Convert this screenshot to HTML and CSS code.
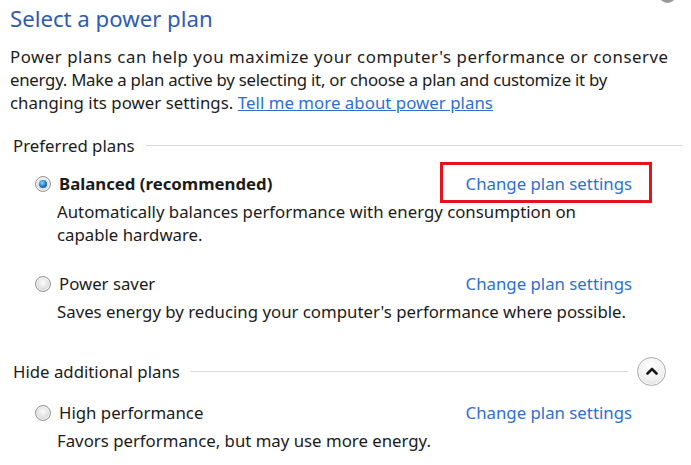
FILE: index.html
```html
<!DOCTYPE html>
<html>
<head>
<meta charset="utf-8">
<link rel="stylesheet" href="styles.css">
</head>
<body>
<div class="page">
  <span class="corner-btn"></span>
  <h1 class="title">Select a power plan</h1>
  <p class="intro"><span class="line-a">Power plans can help you maximize your computer's performance or conserve</span><br><span class="line-b">energy. Make a plan active by selecting it, or choose a plan and customize it by</span><br><span class="line-c">changing its power settings. <a class="link underline" href="#">Tell me more about power plans</a></span></p>

  <div class="group-header first">
    <span class="group-label">Preferred plans</span>
    <span class="rule"></span>
  </div>

  <div class="plan plan-first">
    <div class="plan-row">
      <span class="radio checked"></span>
      <span class="plan-name bold">Balanced (recommended)</span>
      <a class="link plan-link highlighted" href="#">Change plan settings</a>
    </div>
    <div class="plan-desc">Automatically balances performance with energy consumption on<br>capable hardware.</div>
  </div>

  <div class="plan plan-second">
    <div class="plan-row">
      <span class="radio"></span>
      <span class="plan-name">Power saver</span>
      <a class="link plan-link" href="#">Change plan settings</a>
    </div>
    <div class="plan-desc">Saves energy by reducing your computer's performance where possible.</div>
  </div>

  <div class="group-header second">
    <span class="group-label">Hide additional plans</span>
    <span class="rule short"></span>
    <span class="collapse-btn">
      <svg width="12" height="8" viewBox="0 0 12 8"><path d="M1.5 6.5 L6 2 L10.5 6.5" fill="none" stroke="#1a1a1a" stroke-width="2.6" stroke-linecap="round" stroke-linejoin="round"/></svg>
    </span>
  </div>

  <div class="plan plan-third">
    <div class="plan-row">
      <span class="radio"></span>
      <span class="plan-name">High performance</span>
      <a class="link plan-link" href="#">Change plan settings</a>
    </div>
    <div class="plan-desc">Favors performance, but may use more energy.</div>
  </div>
</div>
</body>
</html>
```

FILE: styles.css
```css
html, body {
  margin: 0;
  padding: 0;
  background: #ffffff;
}
body {
  font-family: "Noto Sans", "Open Sans", sans-serif;
  font-size: 16.8px;
  color: #1b1b1b;
  overflow: hidden;
}
.page {
  position: relative;
  width: 691px;
  height: 465px;
  padding-left: 10px;
  box-sizing: border-box;
}
.corner-btn {
  position: absolute;
  left: 659px;
  top: -14px;
  width: 17px;
  height: 17px;
  border-radius: 50%;
  background: #9a9a9a;
}
.title {
  margin: 0;
  padding-top: 4px;
  font-size: 22.2px;
  font-weight: 400;
  line-height: 30px;
  color: #2f5bb5;
}
.intro {
  margin: 11px 0 0 0;
  line-height: 23px;
  white-space: nowrap;
}
.line-a { letter-spacing: 0.55px; }
.line-b { letter-spacing: -0.25px; }
.line-c { letter-spacing: 0.05px; }
.link {
  color: #2d6fd2;
  text-decoration: none;
}
.underline {
  text-decoration: underline;
}
.group-header {
  display: flex;
  align-items: center;
  height: 23px;
  padding-left: 3px;
  width: 673px;
  box-sizing: border-box;
}
.group-header.first {
  margin-top: 20px;
}
.group-header.second {
  margin-top: 37px;
  width: 656px;
}
.group-label {
  white-space: nowrap;
}
.rule {
  flex: 1;
  height: 1px;
  background: #d8d8d8;
  margin-left: 11px;
}
.rule.short {
  margin-right: 9px;
}
.collapse-btn {
  flex: none;
  width: 27px;
  height: 27px;
  border-radius: 50%;
  border: 1px solid #a9a9a9;
  background: radial-gradient(circle at 50% 35%, #ffffff 0%, #f1f1f1 55%, #d6d6d6 100%);
  box-shadow: inset 0 0 0 1px #fafafa;
  display: flex;
  align-items: center;
  justify-content: center;
}
.collapse-btn svg {
  display: block;
  margin-top: -1px;
}
.plan {
  padding-left: 25px;
  width: 622px;
  box-sizing: border-box;
}
.plan-first { margin-top: 15px; }
.plan-second { margin-top: 26px; }
.plan-third { margin-top: 18px; }
.plan-row {
  display: flex;
  align-items: center;
  height: 23px;
  position: relative;
}
.radio {
  flex: none;
  width: 14px;
  height: 14px;
  border-radius: 50%;
  border: 1px solid #969696;
  background: radial-gradient(circle at 50% 40%, #fbfbfb 0%, #e6e6e6 45%, #c4c4c4 100%);
  box-shadow: inset 0 0 0 1px #f2f2f2;
  margin-right: 8px;
  position: relative;
}
.radio.checked::after {
  content: "";
  position: absolute;
  left: 3px;
  top: 3px;
  width: 8px;
  height: 8px;
  border-radius: 50%;
  background: radial-gradient(circle at 40% 35%, #8fd3ff 0%, #1c7fd0 50%, #0b3f7a 100%);
}
.plan-name {
  white-space: nowrap;
}
.plan-name.bold {
  font-weight: 700;
}
.plan-link {
  margin-left: auto;
  white-space: nowrap;
}
.highlighted {
  position: relative;
  display: inline-block;
  line-height: 23px;
}
.highlighted::before {
  content: "";
  position: absolute;
  left: -26px;
  right: -20px;
  top: -10px;
  bottom: -8px;
  border: 3px solid #e3121c;
}
.plan-desc {
  margin-top: 5px;
  padding-left: 22px;
  line-height: 23px;
  white-space: nowrap;
}
```
